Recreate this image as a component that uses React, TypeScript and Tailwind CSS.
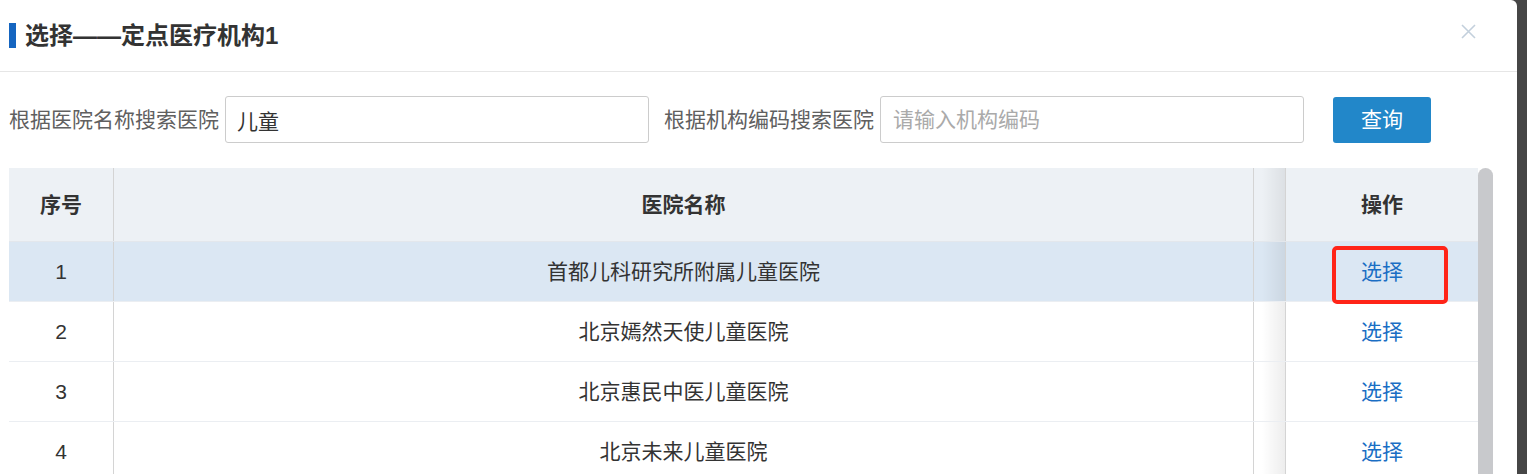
const rows = [
  { id: 1, name: '首都儿科研究所附属儿童医院' },
  { id: 2, name: '北京嫣然天使儿童医院' },
  { id: 3, name: '北京惠民中医儿童医院' },
  { id: 4, name: '北京未来儿童医院' },
]

const font = { fontFamily: '"Liberation Sans", "Noto Sans CJK SC", sans-serif' }

export default function App() {
  return (
    <div className="flex h-[474px] overflow-hidden bg-[#464646]" style={font}>
      <div className="w-[1517px] shrink-0 bg-white rounded-tr-[6px] flex flex-col">
        {/* Dialog header */}
        <div className="h-[72px] shrink-0 border-b border-[#e6e6e6] flex items-center justify-between pl-[9px] pr-[41px]">
          <div className="flex items-center">
            <span className="w-[7px] h-[25px] bg-[#1565c0] mr-[9px]" />
            <span className="text-[24px] font-bold text-[#333] leading-none">选择——定点医疗机构1</span>
          </div>
          <svg className="w-[15px] h-[15px] self-start mt-[24px]" viewBox="0 0 15 15" fill="none">
            <path d="M1 1L14 14M14 1L1 14" stroke="#c3d0dc" strokeWidth="1.6" />
          </svg>
        </div>

        {/* Search row */}
        <div className="flex items-center pl-[9px] pt-[24px] h-[71px] shrink-0">
          <span className="text-[21px] text-[#606060] mr-[6px]">根据医院名称搜索医院</span>
          <input
            className="w-[424px] h-[47px] border border-[#ccc] rounded-[3px] px-[11px] text-[21px] text-[#333] outline-none"
            defaultValue="儿童"
          />
          <span className="text-[21px] text-[#606060] ml-[15px] mr-[6px]">根据机构编码搜索医院</span>
          <input
            className="w-[424px] h-[47px] border border-[#ccc] rounded-[3px] px-[12px] text-[21px] text-[#333] placeholder:text-[#aaa] outline-none"
            placeholder="请输入机构编码"
          />
          <button className="ml-[29px] w-[98px] h-[46px] bg-[#2287c9] rounded-[3px] text-white text-[21px]">
            查询
          </button>
        </div>

        {/* Table */}
        <div className="flex mt-[25px] pl-[9px]">
          <div className="w-[1469px] shrink-0">
            <div className="flex h-[74px] bg-[#edf1f5] border-b border-[#e3e7ec] text-[21px] font-bold text-[#333]">
              <div className="w-[105px] border-r border-[#d4d4d4] flex items-center justify-center">序号</div>
              <div className="w-[1140px] border-r border-[#d4d4d4] flex items-center justify-center">医院名称</div>
              <div className="w-[32px] border-r border-[#d4d4d4] bg-[linear-gradient(to_right,transparent_25%,rgba(0,0,0,0.07))]" />
              <div className="flex-1 flex items-center justify-center">操作</div>
            </div>
            {rows.map((r) => (
              <div
                key={r.id}
                className={`flex h-[60px] border-b border-[#ebeef2] text-[21px] text-[#333] ${r.id === 1 ? 'bg-[#dbe7f3]' : 'bg-white'}`}
              >
                <div className="w-[105px] border-r border-[#d4d4d4] flex items-center justify-center">{r.id}</div>
                <div className="w-[1140px] border-r border-[#d4d4d4] flex items-center justify-center">{r.name}</div>
                <div className="w-[32px] border-r border-[#d4d4d4] bg-[linear-gradient(to_right,transparent_25%,rgba(0,0,0,0.07))]" />
                <div className="relative flex-1 flex items-center justify-center text-[#1a6ec4]">
                  选择
                  {r.id === 1 && (
                    <div className="absolute left-[46px] top-[4px] w-[116px] h-[58px] border-[4px] border-[#ff2418] rounded-[5px]" />
                  )}
                </div>
              </div>
            ))}
          </div>
          <div className="w-[15px] h-[400px] shrink-0 bg-[#c8c9cc] rounded-t-full" />
        </div>
      </div>
    </div>
  )
}
